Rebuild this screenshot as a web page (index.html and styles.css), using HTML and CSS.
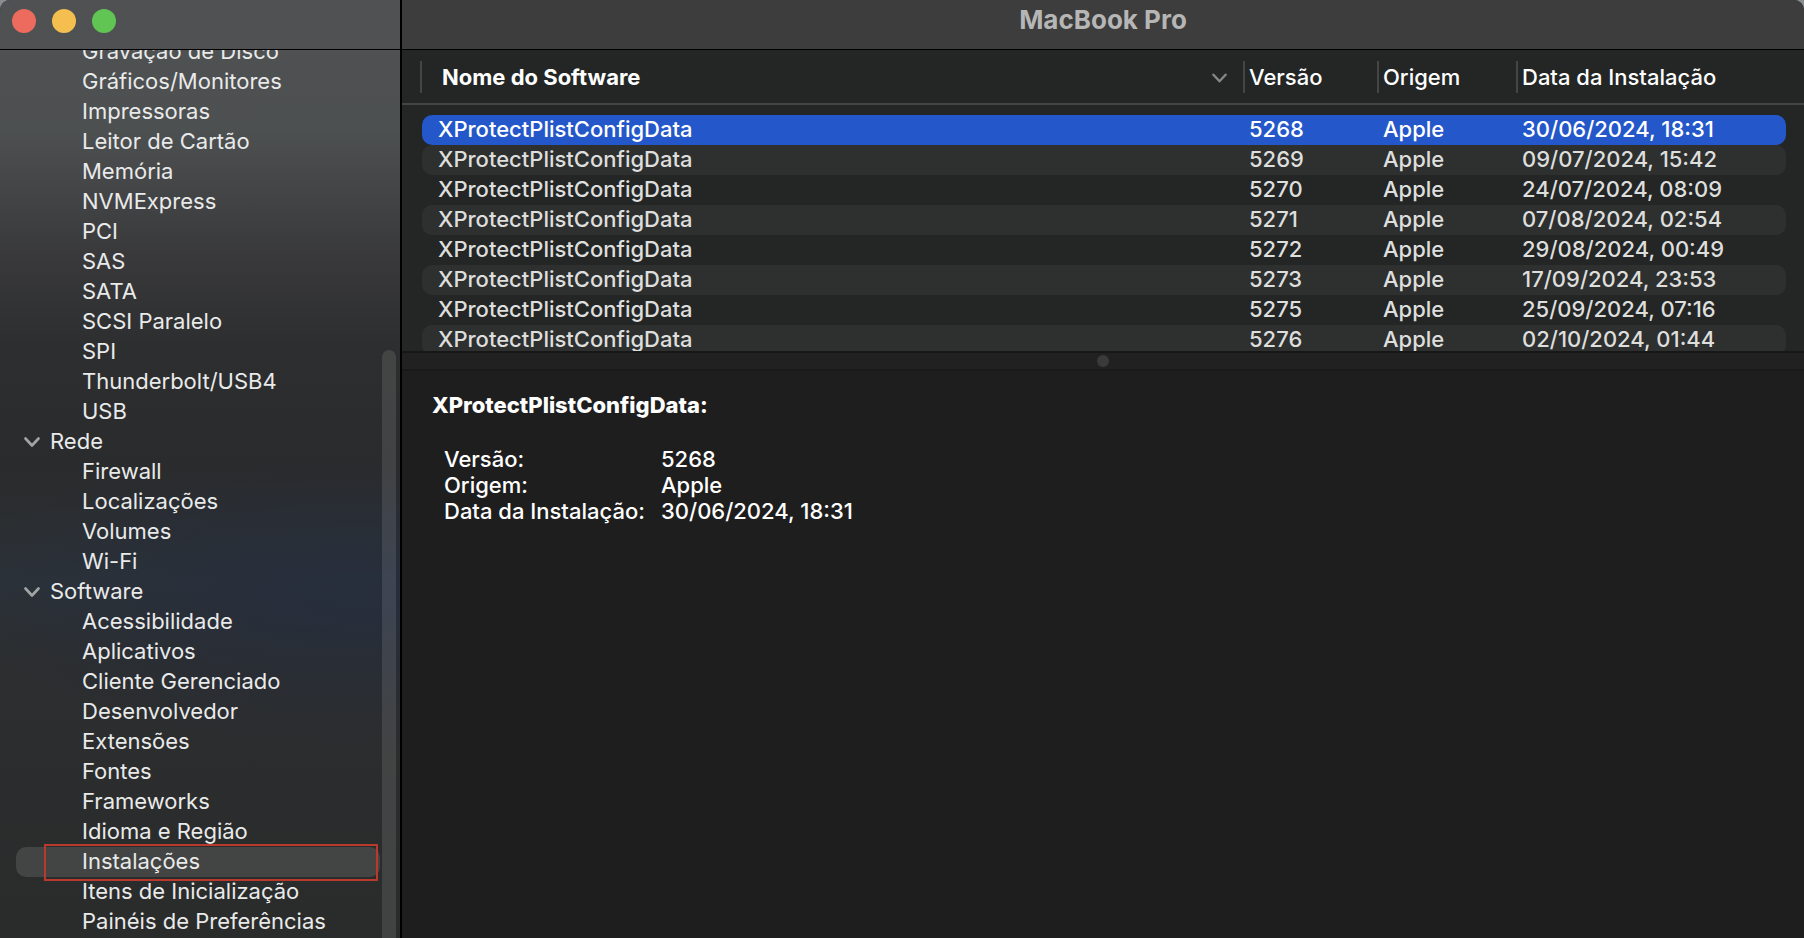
FILE: index.html
```html
<!DOCTYPE html>
<html lang="pt-BR">
<head>
    <meta charset="UTF-8">
    <meta name="viewport" content="width=device-width, initial-scale=1.0">
    <title>MacBook Pro</title>
    <link rel="stylesheet" href="styles.css">
</head>
<body>

    <!-- Sidebar -->
    <aside class="sidebar">
        <div class="window-controls">
            <button class="control close" aria-label="Fechar"></button>
            <button class="control minimize" aria-label="Minimizar"></button>
            <button class="control maximize" aria-label="Ampliar"></button>
        </div>
        <nav class="sidebar-scroll">
            <ul class="tree">
                <li><a href="#">Gravação de Disco</a></li>
                <li><a href="#">Gráficos/Monitores</a></li>
                <li><a href="#">Impressoras</a></li>
                <li><a href="#">Leitor de Cartão</a></li>
                <li><a href="#">Memória</a></li>
                <li><a href="#">NVMExpress</a></li>
                <li><a href="#">PCI</a></li>
                <li><a href="#">SAS</a></li>
                <li><a href="#">SATA</a></li>
                <li><a href="#">SCSI Paralelo</a></li>
                <li><a href="#">SPI</a></li>
                <li><a href="#">Thunderbolt/USB4</a></li>
                <li><a href="#">USB</a></li>
                <li class="group"><a href="#"><svg class="chevron" viewBox="0 0 16 10"><path d="M1.5 1.5 L8 8.5 L14.5 1.5"/></svg>Rede</a></li>
                <li><a href="#">Firewall</a></li>
                <li><a href="#">Localizações</a></li>
                <li><a href="#">Volumes</a></li>
                <li><a href="#">Wi-Fi</a></li>
                <li class="group"><a href="#"><svg class="chevron" viewBox="0 0 16 10"><path d="M1.5 1.5 L8 8.5 L14.5 1.5"/></svg>Software</a></li>
                <li><a href="#">Acessibilidade</a></li>
                <li><a href="#">Aplicativos</a></li>
                <li><a href="#">Cliente Gerenciado</a></li>
                <li><a href="#">Desenvolvedor</a></li>
                <li><a href="#">Extensões</a></li>
                <li><a href="#">Fontes</a></li>
                <li><a href="#">Frameworks</a></li>
                <li><a href="#">Idioma e Região</a></li>
                <li class="selected"><a href="#">Instalações</a></li>
                <li><a href="#">Itens de Inicialização</a></li>
                <li><a href="#">Painéis de Preferências</a></li>
            </ul>
            <div class="scroll-thumb"></div>
        </nav>
    </aside>

    <!-- Main content -->
    <main>
        <header>
            <h1>MacBook Pro</h1>
        </header>

        <div class="table-pane">
            <table>
                <thead>
                    <tr>
                        <th class="sorted"><span>Nome do Software<svg class="chevron" viewBox="0 0 16 10"><path d="M1.5 1.5 L8 8.5 L14.5 1.5"/></svg></span></th>
                        <th class="version"><span>Versão</span></th>
                        <th class="source"><span>Origem</span></th>
                        <th class="date"><span>Data da Instalação</span></th>
                    </tr>
                </thead>
                <tbody>
                    <tr class="selected"><td>XProtectPlistConfigData</td><td>5268</td><td>Apple</td><td>30/06/2024, 18:31</td></tr>
                    <tr><td>XProtectPlistConfigData</td><td>5269</td><td>Apple</td><td>09/07/2024, 15:42</td></tr>
                    <tr><td>XProtectPlistConfigData</td><td>5270</td><td>Apple</td><td>24/07/2024, 08:09</td></tr>
                    <tr><td>XProtectPlistConfigData</td><td>5271</td><td>Apple</td><td>07/08/2024, 02:54</td></tr>
                    <tr><td>XProtectPlistConfigData</td><td>5272</td><td>Apple</td><td>29/08/2024, 00:49</td></tr>
                    <tr><td>XProtectPlistConfigData</td><td>5273</td><td>Apple</td><td>17/09/2024, 23:53</td></tr>
                    <tr><td>XProtectPlistConfigData</td><td>5275</td><td>Apple</td><td>25/09/2024, 07:16</td></tr>
                    <tr><td>XProtectPlistConfigData</td><td>5276</td><td>Apple</td><td>02/10/2024, 01:44</td></tr>
                </tbody>
            </table>
        </div>

        <div class="splitter"></div>

        <section class="detail">
            <h2>XProtectPlistConfigData:</h2>
            <dl>
                <dt>Versão:</dt>
                <dd>5268</dd>
                <dt>Origem:</dt>
                <dd>Apple</dd>
                <dt>Data da Instalação:</dt>
                <dd>30/06/2024, 18:31</dd>
            </dl>
        </section>
    </main>

</body>
</html>
```
FILE: styles.css
```css
* {
    box-sizing: border-box;
}
html {
    overflow: hidden;
    background-color: #8a8d90;
}
body {
    margin: 0;
    height: 100vh;
    display: flex;
    overflow: hidden;
    border-radius: 10px 10px 0 0;
    background-color: #1e1e1e;
    color: #fff;
    font-family: Inter, "Liberation Sans", sans-serif;
    font-size: 22px;
    line-height: 30px;
}

/* Sidebar */
.sidebar {
    flex: 0 0 402px;
    display: flex;
    flex-direction: column;
    border-right: 2px solid #000;
    background:
        radial-gradient(ellipse 420px 150px at 90% 64%, rgba(36, 44, 62, 0.7), rgba(36, 44, 62, 0)),
        linear-gradient(#4f5152 0%, #4d5051 14%, #454748 19%, #38383a 28%, #2d2e2f 37%, #2a2b2c 50%, #2c3238 62%, #2c2e2f 71%, #2a2b2b 100%);
}
.window-controls {
    flex: none;
    height: 50px;
    padding: 9px 12px;
    display: flex;
    gap: 16px;
    border-bottom: 1px solid #000;
}
.control {
    width: 24px;
    height: 24px;
    padding: 0;
    border: none;
    border-radius: 50%;
}
.close {
    background-color: #ed6a5e;
}
.minimize {
    background-color: #f5bf4f;
}
.maximize {
    background-color: #61c554;
}
.sidebar-scroll {
    flex: 1;
    min-height: 0;
    overflow: hidden;
    position: relative;
}
.tree {
    list-style: none;
    margin: -13px 20px 0 16px;
    padding: 0;
}
.tree li {
    position: relative;
    border-radius: 10px;
}
.tree a {
    display: flex;
    align-items: center;
    height: 30px;
    padding: 0 0 2px 66px;
    color: #e9eaea;
    text-decoration: none;
}
.tree .group a {
    padding-left: 8px;
    gap: 10px;
}
.tree .group .chevron {
    margin-top: 2px;
}
.tree .selected {
    background-color: #434444;
}
.tree .selected::after {
    content: "";
    position: absolute;
    top: -3px;
    right: 2px;
    bottom: -4px;
    left: 28px;
    border: 2px solid #b83a2c;
}
.chevron {
    width: 16px;
    height: 10px;
    fill: none;
    stroke: #a3a4a5;
    stroke-width: 2.6;
    stroke-linecap: round;
    stroke-linejoin: round;
}
.scroll-thumb {
    position: absolute;
    top: 300px;
    right: 4px;
    bottom: -10px;
    width: 14px;
    border-radius: 7px;
    background-color: rgba(255, 255, 255, 0.11);
}

/* Main content */
main {
    flex: 1;
    min-width: 0;
    display: flex;
    flex-direction: column;
}
header {
    flex: none;
    height: 50px;
    padding-top: 5px;
    background-color: #3c3d3c;
    border-bottom: 1px solid #000;
}
h1 {
    margin: 0;
    font-size: 26px;
    font-weight: 700;
    text-align: center;
    color: #b5b6b5;
}
.table-pane {
    flex: none;
    height: 301px;
    padding: 0 18px 0 20px;
    overflow: hidden;
    background: linear-gradient(#434645, #434645) 0 53px / 100% 2px no-repeat #232625;
}
table {
    width: 100%;
    table-layout: fixed;
    border-spacing: 0;
}
th {
    height: 65px;
    padding: 11px 0 22px;
    font-weight: 500;
    text-align: left;
}
th span {
    display: flex;
    align-items: center;
    justify-content: space-between;
    height: 32px;
    margin-left: -1px;
    padding-left: 4px;
    border-left: 2px solid #434645;
}
.sorted {
    font-weight: 700;
}
.sorted span {
    margin-left: -2px;
    padding: 0 17px 0 20px;
}
.sorted .chevron {
    width: 15px;
    margin-top: 2px;
    stroke: #858786;
}
.version {
    width: 134px;
}
.source {
    width: 139px;
}
.date {
    width: 269px;
}
td {
    height: 30px;
    padding: 0 0 2px 5px;
    line-height: 28px;
    font-weight: 500;
    color: #dededd;
}
td:first-child {
    padding-left: 16px;
    border-radius: 10px 0 0 10px;
}
td:last-child {
    border-radius: 0 10px 10px 0;
}
tbody tr:nth-child(even) td {
    background-color: #2d302f;
}
tbody .selected td {
    background-color: #2457c9;
    color: #fff;
}

/* Divider between the table and the detail text */
.splitter {
    flex: none;
    height: 20px;
    display: flex;
    align-items: center;
    justify-content: center;
    background-color: #212121;
    border-top: 2px solid #171717;
    border-bottom: 2px solid #191919;
}
.splitter::before {
    content: "";
    width: 12px;
    height: 12px;
    border-radius: 50%;
    background-color: #3a3a3a;
}

.detail {
    flex: 1;
    padding: 19px 30px;
}
h2 {
    margin: 0;
    font-size: 22px;
    font-weight: 800;
}
dl {
    display: grid;
    grid-template-columns: 217px 1fr;
    margin: 26px 0 0 12px;
    line-height: 26px;
    font-weight: 500;
}
dd {
    margin: 0;
}
```
